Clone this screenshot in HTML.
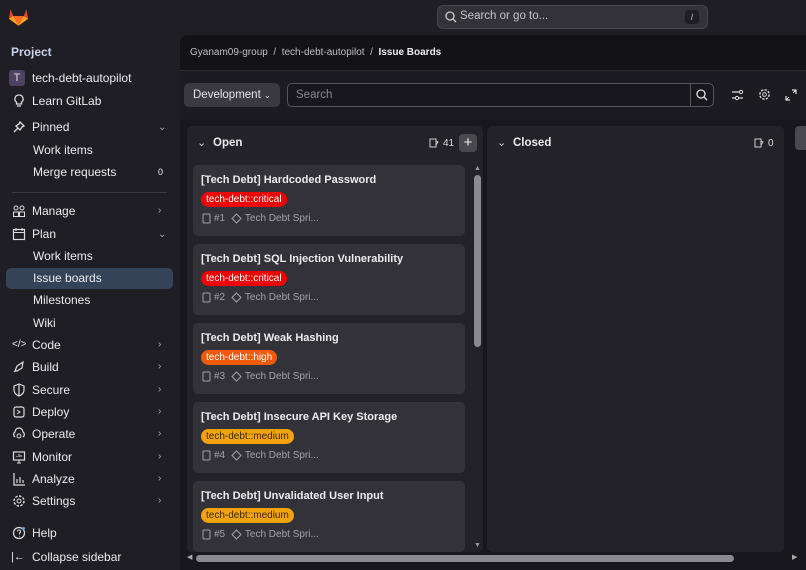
<!DOCTYPE html>
<html><head><meta charset="utf-8"><style>
*{box-sizing:border-box;margin:0;padding:0}
body{width:806px;height:570px;overflow:hidden;background:#1f1e24;font-family:"Liberation Sans",sans-serif;color:#ececef;position:relative}
.a{position:absolute}
.nav{position:absolute;left:0;width:180px;font-size:12px;color:#ececef}
.it{position:absolute;left:12px;height:20px;line-height:20px}
.it .ic{position:absolute;left:0;top:3px;width:14px;height:14px}
.it span{position:absolute;left:20px;white-space:nowrap}
.chev{position:absolute;left:158px;color:#aaa;font-size:10px}
.sub{position:absolute;left:33px;height:20px;line-height:20px;font-size:12px}
svg{display:block}
.card{position:absolute;left:193px;width:272px;height:71px;background:#333238;border-radius:5px}
.card .t{position:absolute;left:8px;top:9px;font-size:11px;font-weight:bold;color:#ececef;white-space:nowrap}
.card .l{position:absolute;left:8px;top:27px;height:15px;line-height:15px;padding:0 5px;border-radius:8px;font-size:10px}
.card .m{position:absolute;left:9px;top:48px;font-size:10px;color:#a4a3a8;white-space:nowrap;display:flex;align-items:center;gap:3px}
</style></head><body>
<svg class="a" style="left:8px;top:7px" width="21" height="20" viewBox="0 0 24 22"><path d="M12 21L1 13 3 2l3 8h12l3-8 2 11z" fill="#e24329"/><path d="M12 21L6 10h12z" fill="#fc6d26"/><path d="M1 13l5-3 6 11z M23 13l-5-3-6 11z" fill="#fca326"/></svg>
<div class="a" style="left:11px;top:45px;font-size:12px;font-weight:bold;color:#c8d2ea">Project</div>
<div class="a" style="left:9px;top:70px;width:16px;height:16px;border-radius:3px;background:#4d4262;color:#ddd;font-size:11px;text-align:center;line-height:16px">T</div>
<div class="a" style="left:32px;top:71px;font-size:12px">tech-debt-autopilot</div>
<div class="nav" style="top:0">
<div class="it" style="top:91px"><svg class="ic" viewBox="0 0 14 14"><path d="M7 1a4 4 0 0 0-2.5 7.2V10h5V8.2A4 4 0 0 0 7 1zM5 12h4" stroke="#ddd" fill="none" stroke-width="1.3"/></svg><span>Learn GitLab</span></div>
<div class="it" style="top:117px"><svg class="ic" viewBox="0 0 14 14"><path d="M2 12l4-4M8 2l4 4-2 1-2 3-4-4 3-2z" stroke="#ddd" fill="none" stroke-width="1.3"/></svg><span>Pinned</span></div><div class="chev" style="top:122px">⌄</div>
<div class="sub" style="top:140px">Work items</div>
<div class="sub" style="top:162px">Merge requests</div><div class="a" style="left:158px;top:167px;font-size:9px">0</div>
<div class="a" style="left:12px;top:192px;width:155px;height:1px;background:#3a3940"></div>
<div class="it" style="top:201px"><svg class="ic" viewBox="0 0 14 14"><circle cx="4" cy="4" r="2" stroke="#ddd" fill="none"/><circle cx="10" cy="4" r="2" stroke="#ddd" fill="none"/><rect x="1.5" y="8" width="5" height="4.5" stroke="#ddd" fill="none"/><rect x="7.5" y="8" width="5" height="4.5" stroke="#ddd" fill="none"/></svg><span>Manage</span></div><div class="chev" style="top:205px">›</div>
<div class="it" style="top:224px"><svg class="ic" viewBox="0 0 14 14"><rect x="1.5" y="2.5" width="11" height="10" stroke="#ddd" fill="none" stroke-width="1.2"/><path d="M1.5 5.5h11M4 1v3M10 1v3" stroke="#ddd"/></svg><span>Plan</span></div><div class="chev" style="top:229px">⌄</div>
<div class="sub" style="top:246px">Work items</div>
<div class="a" style="left:6px;top:268px;width:167px;height:21px;border-radius:5px;background:#354358"></div>
<div class="sub" style="top:268px">Issue boards</div>
<div class="sub" style="top:290px">Milestones</div>
<div class="sub" style="top:313px">Wiki</div>
<div class="it" style="top:335px"><span style="left:0;font-size:10px">&lt;/&gt;</span><span>Code</span></div><div class="chev" style="top:339px">›</div>
<div class="it" style="top:357px"><svg class="ic" viewBox="0 0 14 14"><path d="M3 11l2-5 6-4-1 6-5 3zM2 12l2-2" stroke="#ddd" fill="none" stroke-width="1.2"/></svg><span>Build</span></div><div class="chev" style="top:361px">›</div>
<div class="it" style="top:380px"><svg class="ic" viewBox="0 0 14 14"><path d="M7 1l5 2v4c0 3-2.5 5-5 6-2.5-1-5-3-5-6V3zM7 1v12" stroke="#ddd" fill="none" stroke-width="1.2"/></svg><span>Secure</span></div><div class="chev" style="top:384px">›</div>
<div class="it" style="top:402px"><svg class="ic" viewBox="0 0 14 14"><rect x="2" y="2" width="10" height="10" rx="2" stroke="#ddd" fill="none" stroke-width="1.2"/><path d="M5 5l3 2-3 2" stroke="#ddd" fill="none"/></svg><span>Deploy</span></div><div class="chev" style="top:406px">›</div>
<div class="it" style="top:424px"><svg class="ic" viewBox="0 0 14 14"><path d="M3 10a3 3 0 0 1 0-5 4 4 0 0 1 8 0 3 3 0 0 1 0 5" stroke="#ddd" fill="none" stroke-width="1.2"/><circle cx="7" cy="9" r="2" stroke="#ddd" fill="none"/></svg><span>Operate</span></div><div class="chev" style="top:428px">›</div>
<div class="it" style="top:447px"><svg class="ic" viewBox="0 0 14 14"><rect x="1.5" y="2" width="11" height="8" stroke="#ddd" fill="none" stroke-width="1.2"/><path d="M5 13h4M7 10v3M5 7V6M7 7V4M9 7V5" stroke="#ddd"/></svg><span>Monitor</span></div><div class="chev" style="top:451px">›</div>
<div class="it" style="top:469px"><svg class="ic" viewBox="0 0 14 14"><path d="M2 1v12h11M5 11V7M8 11V5M11 11V8" stroke="#ddd" fill="none" stroke-width="1.2"/></svg><span>Analyze</span></div><div class="chev" style="top:473px">›</div>
<div class="it" style="top:491px"><svg class="ic" viewBox="0 0 14 14"><circle cx="7" cy="7" r="2" stroke="#ddd" fill="none"/><circle cx="7" cy="7" r="5" stroke="#ddd" fill="none" stroke-width="1.4" stroke-dasharray="2.5 1.4"/></svg><span>Settings</span></div><div class="chev" style="top:495px">›</div>
<div class="it" style="top:523px"><svg class="ic" viewBox="0 0 14 14"><circle cx="7" cy="7" r="5.5" stroke="#ddd" fill="none" stroke-width="1.2"/><path d="M5.5 5.5a1.5 1.5 0 1 1 2 1.4V8.5M7.5 10.5v.5" stroke="#ddd" fill="none"/><circle cx="11.5" cy="2.5" r="1.5" fill="#63a6e9"/></svg><span>Help</span></div>
<div class="it" style="top:547px"><span style="left:-1px;font-size:11px">|←</span><span>Collapse sidebar</span></div>
</div>
<div class="a" style="left:437px;top:5px;width:271px;height:24px;border-radius:6px;background:#333238;border:1px solid #48474d"></div>
<svg class="a" style="left:445px;top:11px" width="12" height="12" viewBox="0 0 12 12"><circle cx="5" cy="5" r="4" stroke="#ccc" fill="none" stroke-width="1.3"/><path d="M8 8l3 3" stroke="#ccc" stroke-width="1.3"/></svg>
<div class="a" style="left:460px;top:10px;font-size:11.5px;color:#c5c4c9">Search or go to...</div>
<div class="a" style="left:685px;top:10px;width:14px;height:14px;border-radius:3px;background:#1f1e24;font-size:9px;text-align:center;line-height:14px;color:#ccc">/</div>
<div class="a" style="left:180px;top:35px;width:626px;height:535px;background:#18171d;border-top-left-radius:8px"></div>
<div class="a" style="left:180px;top:35px;width:626px;height:36px;background:#131217;border-top-left-radius:8px;border-bottom:1px solid #2a292f"></div>
<div class="a" style="left:190px;top:47px;font-size:10px;color:#bfbfc3;white-space:nowrap">Gyanam09-group &nbsp;/&nbsp; tech-debt-autopilot &nbsp;/&nbsp; <b style="color:#ececef">Issue Boards</b></div>
<div class="a" style="left:180px;top:71px;width:626px;height:49px;background:#1c1b21"></div>
<div class="a" style="left:184px;top:83px;width:96px;height:24px;border-radius:5px;background:#3a3940;font-size:11.5px;line-height:24px;padding-left:9px;color:#e6e6e9">Development <span style="font-size:8px">⌄</span></div>
<div class="a" style="left:287px;top:83px;width:427px;height:24px;border-radius:5px;background:#18171d;border:1px solid #55545a"></div>
<div class="a" style="left:296px;top:89px;font-size:11.5px;color:#8a898f">Search</div>
<div class="a" style="left:690px;top:84px;width:1px;height:22px;background:#55545a"></div>
<svg class="a" style="left:696px;top:89px" width="12" height="12" viewBox="0 0 12 12"><circle cx="5" cy="5" r="4" stroke="#ddd" fill="none" stroke-width="1.3"/><path d="M8 8l3 3" stroke="#ddd" stroke-width="1.3"/></svg>
<svg class="a" style="left:731px;top:89px" width="13" height="12" viewBox="0 0 13 12"><path d="M1 3h7M1 9h3M8 9h4" stroke="#ddd" stroke-width="1.2"/><circle cx="10" cy="3" r="1.6" stroke="#ddd" fill="none"/><circle cx="6" cy="9" r="1.6" stroke="#ddd" fill="none"/></svg>
<svg class="a" style="left:758px;top:88px" width="13" height="13" viewBox="0 0 14 14"><circle cx="7" cy="7" r="2" stroke="#ddd" fill="none"/><circle cx="7" cy="7" r="5" stroke="#ddd" fill="none" stroke-width="1.5" stroke-dasharray="2.5 1.4"/></svg>
<svg class="a" style="left:785px;top:89px" width="12" height="12" viewBox="0 0 12 12"><path d="M7 1h4v4M11 1L8 4M1 7v4h4M1 11l3-3" stroke="#ddd" fill="none" stroke-width="1.2"/></svg>
<div class="a" style="left:187px;top:126px;width:296px;height:426px;background:#232228;border-radius:5px"></div>
<div class="a" style="left:487px;top:126px;width:297px;height:426px;background:#232228;border-radius:5px"></div>
<div class="a" style="left:795px;top:126px;width:11px;height:24px;background:#4a494f;border-radius:4px 0 0 4px"></div>
<div class="a" style="left:197px;top:136px;font-size:11px;color:#ccc">⌄</div>
<div class="a" style="left:213px;top:137px;font-size:11.5px;font-weight:bold">Open</div>
<svg class="a" style="left:429px;top:138px" width="10" height="10" viewBox="0 0 10 10"><path d="M1 1h6v8H1zM7 3l2 1-2 3" stroke="#ccc" fill="none"/></svg>
<div class="a" style="left:443px;top:138px;font-size:10px;color:#ddd">41</div>
<div class="a" style="left:459px;top:134px;width:18px;height:18px;border-radius:4px;background:#4a494f;text-align:center;line-height:17px;font-size:15px;color:#eee">+</div>
<div class="a" style="left:497px;top:136px;font-size:11px;color:#ccc">⌄</div>
<div class="a" style="left:513px;top:137px;font-size:11.5px;font-weight:bold">Closed</div>
<svg class="a" style="left:754px;top:138px" width="10" height="10" viewBox="0 0 10 10"><path d="M1 1h6v8H1zM7 3l2 1-2 3" stroke="#ccc" fill="none"/></svg>
<div class="a" style="left:768px;top:138px;font-size:10px;color:#ddd">0</div>
<div class="a" style="left:474px;top:165px;font-size:7px;color:#999">▲</div>
<div class="a" style="left:474px;top:175px;width:7px;height:172px;background:#8a898f;border-radius:4px"></div>
<div class="a" style="left:474px;top:542px;font-size:7px;color:#999">▼</div>
<div class="card" style="top:165px"><div class="t">[Tech Debt] Hardcoded Password</div><div class="l" style="background:#e00;color:#fff">tech-debt::critical</div><div class="m"><svg width="9" height="11" viewBox="0 0 9 11"><rect x="1" y="1" width="7" height="9" rx="1" stroke="#a4a3a8" fill="none"/></svg>#1&nbsp;<svg width="11" height="11" viewBox="0 0 11 11"><path d="M5.5 1l4.5 4.5-4.5 4.5L1 5.5z" stroke="#a4a3a8" fill="none"/></svg>Tech Debt Spri...</div></div>
<div class="card" style="top:244px"><div class="t">[Tech Debt] SQL Injection Vulnerability</div><div class="l" style="background:#e00;color:#fff">tech-debt::critical</div><div class="m"><svg width="9" height="11" viewBox="0 0 9 11"><rect x="1" y="1" width="7" height="9" rx="1" stroke="#a4a3a8" fill="none"/></svg>#2&nbsp;<svg width="11" height="11" viewBox="0 0 11 11"><path d="M5.5 1l4.5 4.5-4.5 4.5L1 5.5z" stroke="#a4a3a8" fill="none"/></svg>Tech Debt Spri...</div></div>
<div class="card" style="top:323px"><div class="t">[Tech Debt] Weak Hashing</div><div class="l" style="background:#f05a0a;color:#fff">tech-debt::high</div><div class="m"><svg width="9" height="11" viewBox="0 0 9 11"><rect x="1" y="1" width="7" height="9" rx="1" stroke="#a4a3a8" fill="none"/></svg>#3&nbsp;<svg width="11" height="11" viewBox="0 0 11 11"><path d="M5.5 1l4.5 4.5-4.5 4.5L1 5.5z" stroke="#a4a3a8" fill="none"/></svg>Tech Debt Spri...</div></div>
<div class="card" style="top:402px"><div class="t">[Tech Debt] Insecure API Key Storage</div><div class="l" style="background:#f2a20c;color:#3a2a00">tech-debt::medium</div><div class="m"><svg width="9" height="11" viewBox="0 0 9 11"><rect x="1" y="1" width="7" height="9" rx="1" stroke="#a4a3a8" fill="none"/></svg>#4&nbsp;<svg width="11" height="11" viewBox="0 0 11 11"><path d="M5.5 1l4.5 4.5-4.5 4.5L1 5.5z" stroke="#a4a3a8" fill="none"/></svg>Tech Debt Spri...</div></div>
<div class="card" style="top:481px"><div class="t">[Tech Debt] Unvalidated User Input</div><div class="l" style="background:#f2a20c;color:#3a2a00">tech-debt::medium</div><div class="m"><svg width="9" height="11" viewBox="0 0 9 11"><rect x="1" y="1" width="7" height="9" rx="1" stroke="#a4a3a8" fill="none"/></svg>#5&nbsp;<svg width="11" height="11" viewBox="0 0 11 11"><path d="M5.5 1l4.5 4.5-4.5 4.5L1 5.5z" stroke="#a4a3a8" fill="none"/></svg>Tech Debt Spri...</div></div>
<div class="a" style="left:187px;top:553px;font-size:7px;color:#aaa">◀</div>
<div class="a" style="left:196px;top:555px;width:538px;height:7px;background:#8a898f;border-radius:4px"></div>
<div class="a" style="left:792px;top:553px;font-size:7px;color:#aaa">▶</div>
</body></html>
